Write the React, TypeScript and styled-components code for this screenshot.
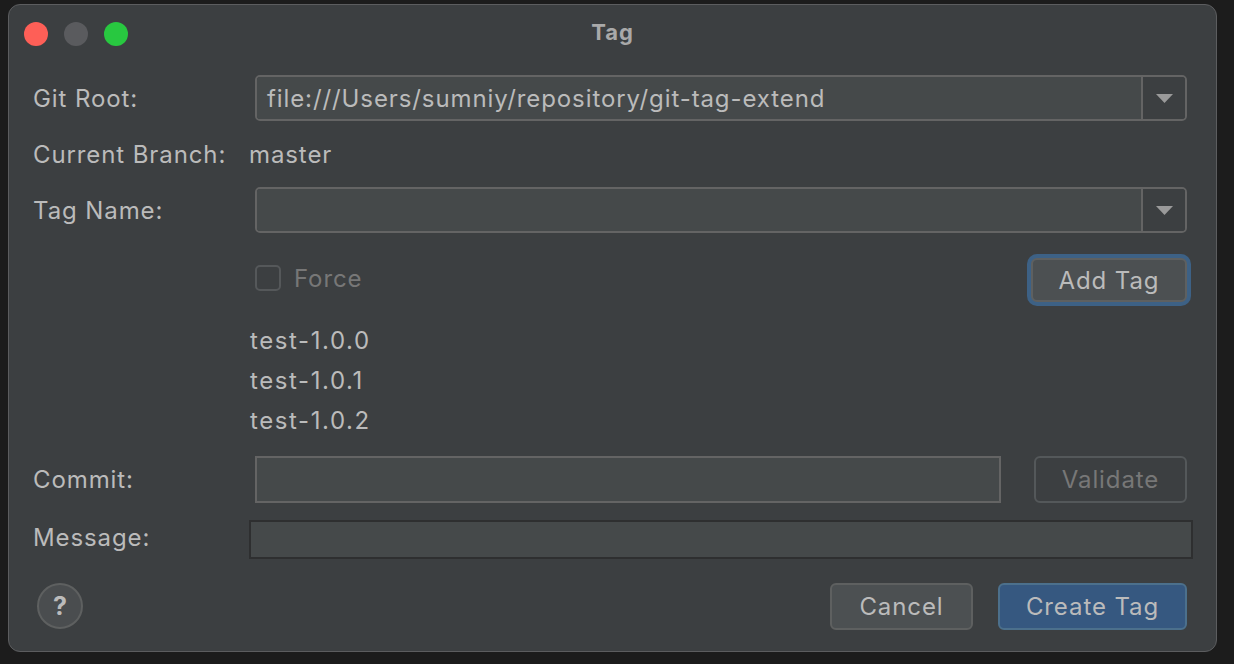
import { FC } from 'react';
import styled, { createGlobalStyle } from 'styled-components';

const GlobalStyle = createGlobalStyle`
  html, body {
    margin: 0;
    padding: 0;
    background: #1c1c1c;
  }
  * {
    box-sizing: border-box;
  }
`;

const Screen = styled.div`
  width: 1234px;
  height: 664px;
  padding: 4px 0 0 8px;
  font-family: Inter, "Liberation Sans", sans-serif;
  letter-spacing: 0.9px;
`;

const Window = styled.div`
  width: 1209px;
  height: 648px;
  background: #3c3f41;
  border: 1px solid #5c5d5f;
  border-radius: 12px;
  display: flex;
  flex-direction: column;
  overflow: hidden;
`;

const TitleBar = styled.div`
  height: 58px;
  flex-shrink: 0;
  display: grid;
  grid-template-columns: 1fr auto 1fr;
  align-items: center;
  padding: 0 15px 4px 15px;
`;

const Lights = styled.div`
  display: flex;
  gap: 16px;
  padding-top: 4px;
`;

const Light = styled.span<{ $color: string }>`
  width: 24px;
  height: 24px;
  border-radius: 50%;
  background: ${(p) => p.$color};
`;

const Title = styled.div`
  font-size: 22px;
  font-weight: 700;
  letter-spacing: 1px;
  color: #a9a9a9;
`;

const Body = styled.div`
  flex: 1;
  display: flex;
  flex-direction: column;
  padding: 12px 29px 0 24px;
`;

const Row = styled.div<{ $h: number; $mt?: number }>`
  display: grid;
  grid-template-columns: 222px 1fr;
  align-items: center;
  height: ${(p) => p.$h}px;
  margin-top: ${(p) => p.$mt ?? 0}px;
`;

const Label = styled.div<{ $shift?: number }>`
  font-size: 24px;
  color: #bbbbbb;
  white-space: nowrap;
  margin-top: ${(p) => p.$shift ?? 0}px;
`;

const Value = styled.div`
  font-size: 24px;
  color: #bbbbbb;
  margin-left: -6px;
`;

const Combo = styled.div`
  height: 46px;
  display: flex;
  border: 2px solid #646464;
  border-radius: 5px;
  overflow: hidden;
`;

const ComboField = styled.div`
  flex: 1;
  background: #45494a;
  border-right: 2px solid #646464;
  display: flex;
  align-items: center;
  padding-left: 10px;
  font-size: 24px;
  color: #bbbbbb;
  white-space: nowrap;
`;

const ComboArrow = styled.div`
  width: 42px;
  display: flex;
  align-items: center;
  justify-content: center;
  background: #3c3f41;
`;

const OptionsRow = styled.div`
  display: flex;
  align-items: center;
  justify-content: space-between;
`;

const CheckWrap = styled.label`
  display: flex;
  align-items: center;
  gap: 13px;
  font-size: 24px;
  color: #777777;
  margin-top: -4px;
`;

const CheckBox = styled.span`
  width: 26px;
  height: 26px;
  border: 2px solid #55585a;
  border-radius: 5px;
`;

const Button = styled.button<{ $primary?: boolean; $disabled?: boolean; $focused?: boolean; $w: number }>`
  width: ${(p) => p.$w}px;
  height: ${(p) => (p.$focused ? 44 : 47)}px;
  border-radius: 6px;
  font-family: inherit;
  font-size: 24px;
  letter-spacing: 0.9px;
  padding: 0;
  cursor: default;
  border: 2px solid
    ${(p) => (p.$primary ? '#4c708c' : p.$disabled ? '#54585a' : '#5e6060')};
  background: ${(p) => (p.$primary ? '#365880' : p.$disabled ? '#3c3f41' : '#4c5052')};
  color: ${(p) => (p.$disabled ? '#777777' : '#bbbbbb')};
  box-shadow: ${(p) => (p.$focused ? '0 0 0 4px #3d6185' : 'none')};
`;

const TagList = styled.div`
  margin-left: -5px;
  display: flex;
  flex-direction: column;
`;

const TagItem = styled.div`
  height: 40px;
  line-height: 40px;
  font-size: 24px;
  letter-spacing: 1.6px;
  color: #bbbbbb;
`;

const CommitRow = styled.div`
  display: flex;
  gap: 33px;
  align-items: center;
`;

const TextInput = styled.div<{ $dark?: boolean; $h: number }>`
  flex: 1;
  height: ${(p) => p.$h}px;
  background: #45494a;
  border: 2px solid ${(p) => (p.$dark ? '#2e2f30' : '#646464')};
`;

const MessageInput = styled(TextInput)`
  margin: 0 -6px;
`;

const Footer = styled.div`
  display: flex;
  align-items: center;
  justify-content: space-between;
  height: 46px;
  margin-top: 24px;
  padding-left: 4px;
`;

const HelpButton = styled.div`
  width: 46px;
  height: 46px;
  border-radius: 50%;
  background: #4a4d4f;
  border: 2px solid #5e6060;
  display: flex;
  align-items: center;
  justify-content: center;
  font-size: 25px;
  font-weight: 700;
  letter-spacing: 0;
  color: #bbbbbb;
`;

const FooterActions = styled.div`
  display: flex;
  gap: 25px;
`;

const ArrowIcon: FC = () => (
  <svg width="17" height="9" viewBox="0 0 17 9">
    <path d="M0 0 H17 L8.5 9 Z" fill="#9a9a9a" />
  </svg>
);

const App: FC = () => {
  const tags = ['test-1.0.0', 'test-1.0.1', 'test-1.0.2'];
  return (
    <Screen>
      <GlobalStyle />
      <Window>
        <TitleBar>
          <Lights>
            <Light $color="#fe5f57" />
            <Light $color="#5a5b5e" />
            <Light $color="#28c840" />
          </Lights>
          <Title>Tag</Title>
          <div />
        </TitleBar>
        <Body>
          <Row $h={46}>
            <Label>Git Root:</Label>
            <Combo>
              <ComboField>file:///Users/sumniy/repository/git-tag-extend</ComboField>
              <ComboArrow>
                <ArrowIcon />
              </ComboArrow>
            </Combo>
          </Row>
          <Row $h={66}>
            <Label>Current Branch:</Label>
            <Value>master</Value>
          </Row>
          <Row $h={46}>
            <Label>Tag Name:</Label>
            <Combo>
              <ComboField />
              <ComboArrow>
                <ArrowIcon />
              </ComboArrow>
            </Combo>
          </Row>
          <Row $h={44} $mt={25}>
            <div />
            <OptionsRow>
              <CheckWrap>
                <CheckBox />
                Force
              </CheckWrap>
              <Button $focused $w={156}>Add Tag</Button>
            </OptionsRow>
          </Row>
          <Row $h={120} $mt={19}>
            <div />
            <TagList>
              {tags.map((t) => (
                <TagItem key={t}>{t}</TagItem>
              ))}
            </TagList>
          </Row>
          <Row $h={47} $mt={15}>
            <Label>Commit:</Label>
            <CommitRow>
              <TextInput $h={47} />
              <Button $disabled $w={153}>Validate</Button>
            </CommitRow>
          </Row>
          <Row $h={39} $mt={17}>
            <Label $shift={-4}>Message:</Label>
            <MessageInput $dark $h={39} />
          </Row>
          <Footer>
            <HelpButton>?</HelpButton>
            <FooterActions>
              <Button $w={143}>Cancel</Button>
              <Button $primary $w={189}>Create Tag</Button>
            </FooterActions>
          </Footer>
        </Body>
      </Window>
    </Screen>
  );
};

export default App;
